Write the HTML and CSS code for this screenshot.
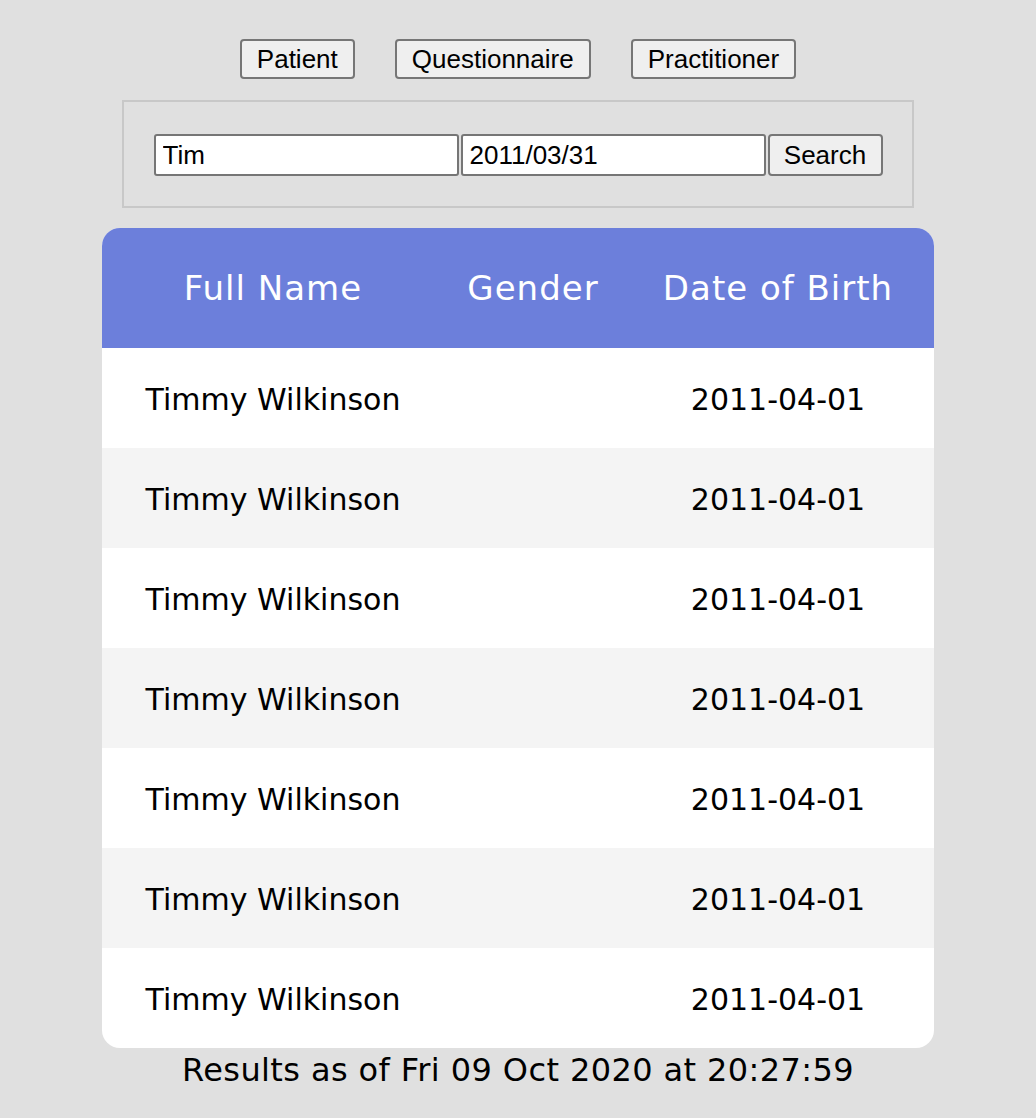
FILE: index.html
```html
<!DOCTYPE html>
<html>
<head>
<meta charset="utf-8">
<link rel="stylesheet" href="styles.css">
</head>
<body>
<div class="page">
  <nav class="tabs">
    <button class="tab">Patient</button>
    <button class="tab">Questionnaire</button>
    <button class="tab">Practitioner</button>
  </nav>
  <form class="search">
    <input class="field" type="text" value="Tim">
    <input class="field" type="text" value="2011/03/31">
    <button class="go" type="button">Search</button>
  </form>
  <table class="results">
    <colgroup><col class="c1"><col class="c2"><col class="c3"></colgroup>
    <thead>
      <tr><th>Full Name</th><th>Gender</th><th>Date of Birth</th></tr>
    </thead>
    <tbody>
      <tr><td>Timmy Wilkinson</td><td></td><td>2011-04-01</td></tr>
      <tr><td>Timmy Wilkinson</td><td></td><td>2011-04-01</td></tr>
      <tr><td>Timmy Wilkinson</td><td></td><td>2011-04-01</td></tr>
      <tr><td>Timmy Wilkinson</td><td></td><td>2011-04-01</td></tr>
      <tr><td>Timmy Wilkinson</td><td></td><td>2011-04-01</td></tr>
      <tr><td>Timmy Wilkinson</td><td></td><td>2011-04-01</td></tr>
      <tr><td>Timmy Wilkinson</td><td></td><td>2011-04-01</td></tr>
    </tbody>
  </table>
  <p class="stamp">Results as of Fri 09 Oct 2020 at 20:27:59</p>
</div>
</body>
</html>
```

FILE: styles.css
```css
html, body {
  margin: 0;
  padding: 0;
  background: #e0e0e0;
}
.page {
  display: flex;
  flex-direction: column;
  align-items: center;
  padding-top: 39px;
  font-family: "DejaVu Sans", Verdana, sans-serif;
}
.tabs {
  display: flex;
  gap: 40px;
}
.tab, .go {
  font-family: "Liberation Sans", Arial, sans-serif;
  font-size: 26px;
  height: 40px;
  padding: 0 15px;
  background: #efefef;
  border: 2px solid #767676;
  border-radius: 4px;
  color: #000;
}
.search {
  margin: 21px 0 0;
  width: 792px;
  height: 108px;
  box-sizing: border-box;
  border: 2px solid #c8c8c8;
  padding-top: 2px;
  display: flex;
  align-items: center;
  justify-content: center;
  gap: 2px;
}
.field {
  font-family: "Liberation Sans", Arial, sans-serif;
  font-size: 26px;
  width: 305px;
  height: 42px;
  box-sizing: border-box;
  padding: 0 7px;
  border: 2px solid #767676;
  border-radius: 3px;
  background: #fff;
  color: #000;
}
.go {
  height: 42px;
  width: 115px;
  padding: 0;
}
.results {
  margin-top: 20px;
  width: 832px;
  border-collapse: separate;
  border-spacing: 0;
  table-layout: fixed;
  border-radius: 18px;
  overflow: hidden;
  background: #fff;
}
.c1 { width: 342px; }
.c2 { width: 178px; }
.c3 { width: 312px; }
.results th {
  background: #6c7fdb;
  color: #fff;
  font-weight: normal;
  font-size: 34px;
  letter-spacing: 1px;
  height: 120px;
  padding: 0;
  text-align: center;
}
.results td {
  height: 100px;
  padding: 0;
  padding-top: 2px;
  box-sizing: border-box;
  text-align: center;
  font-size: 30px;
  color: #000;
}
.results tbody tr:nth-child(even) td {
  background: #f4f4f4;
}
.stamp {
  margin: 2px 0 0;
  font-size: 32px;
  letter-spacing: 0.4px;
  line-height: 40px;
  color: #000;
}
```
